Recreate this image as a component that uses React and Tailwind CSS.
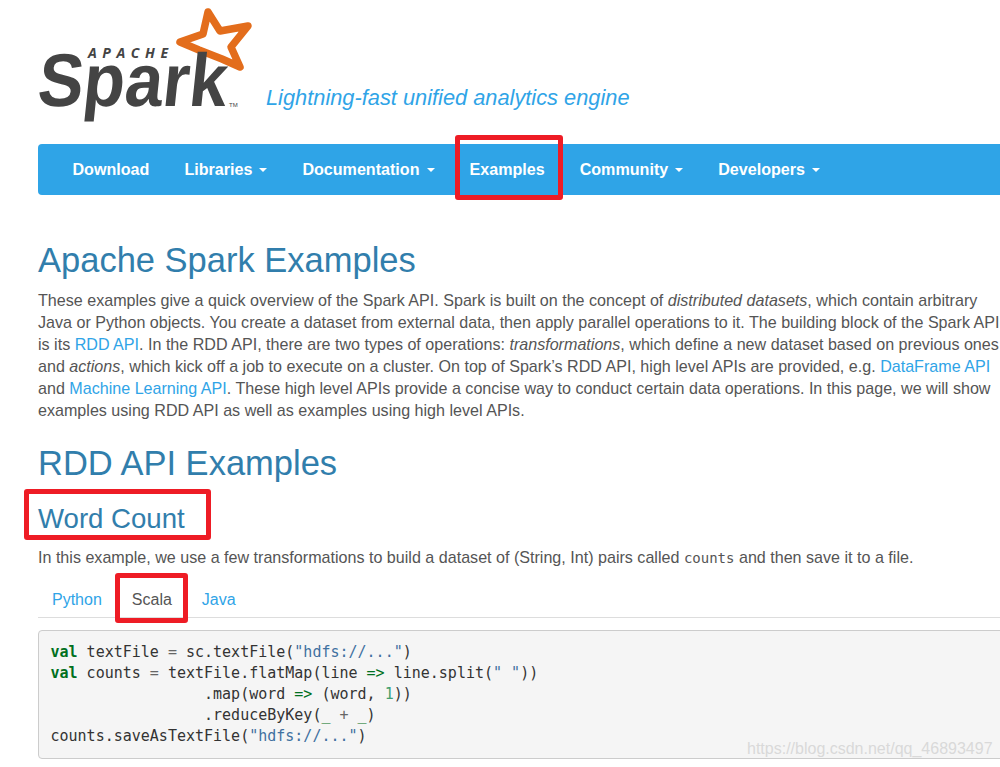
const sans = { fontFamily: '"Liberation Sans", Arial, sans-serif' };

function Logo() {
  return (
    <svg width="230" height="125" viewBox="30 0 230 125" className="block ml-[30px] shrink-0">
      <path d="M208 12 L220 31 L248 26 L231 47 L240 67 L222 59 L199 50 L180 42 L203 34 Z" fill="none" stroke="#e36d1c" strokeWidth="7.5" strokeLinejoin="round" />
      <text x="88" y="58" fontFamily="Open Sans" fontWeight="700" fontStyle="italic" fontSize="14" textLength="80" fill="#444">APACHE</text>
      <text transform="translate(36,106) skewX(-6)" fontFamily="Liberation Sans" fontWeight="700" fontSize="75" textLength="189" lengthAdjust="spacingAndGlyphs" fill="#444">Spark</text>
      <text x="229" y="107" fontFamily="Liberation Sans" fontSize="6" fill="#444">TM</text>
    </svg>
  );
}

function Caret() {
  return <span className="inline-block ml-[7px] align-middle w-0 h-0 border-t-[4.5px] border-x-[4.5px] border-x-transparent border-t-white" />;
}

function NavItem({ label, caret }) {
  return (
    <span className="px-[17.5px] text-white font-bold text-[16.1px] leading-[22px] whitespace-nowrap">
      {label}
      {caret && <Caret />}
    </span>
  );
}

function Highlight({ className }) {
  return <div className={"absolute border-[5px] border-[#ee1c25] rounded-[3px] " + className} />;
}

const Kw = ({ children }) => <span className="font-bold text-[#007020]">{children}</span>;
const Op = ({ children }) => <span className="text-[#666666]">{children}</span>;
const Str = ({ children }) => <span className="text-[#4070a0]">{children}</span>;
const Gr = ({ children }) => <span className="text-[#007020]">{children}</span>;
const Link = ({ children }) => <span className="text-[#2fa4e7]">{children}</span>;

export default function App() {
  return (
    <div className="relative w-[1000px] h-[767px] overflow-hidden bg-white text-[#555555] text-[16.1px] leading-[22px]" style={sans}>
      <div className="flex items-start h-[125px]">
        <Logo />
        <div className="text-[#2fa4e7] italic text-[21.8px] leading-[26px] mt-[85px] ml-[6px] whitespace-nowrap">Lightning-fast unified analytics engine</div>
      </div>

      <div className="ml-[38px] mt-[19px] w-[1000px] h-[51px] bg-[#2fa4e7] rounded-[4px] flex items-center pl-[17px] pb-[2px]">
        <NavItem label="Download" />
        <NavItem label="Libraries" caret />
        <NavItem label="Documentation" caret />
        <NavItem label="Examples" />
        <NavItem label="Community" caret />
        <NavItem label="Developers" caret />
      </div>

      <div className="ml-[38px] w-[968px]">
        <h1 className="text-[#317eac] text-[34.5px] leading-[40px] font-normal mt-[45px]">Apache Spark Examples</h1>
        <p className="mt-[9px]">
          These examples give a quick overview of the Spark API. Spark is built on the concept of <em>distributed datasets</em>, which contain arbitrary Java or Python objects. You create a dataset from external data, then apply parallel operations to it. The building block of the Spark API is its <Link>RDD API</Link>. In the RDD API, there are two types of operations: <em>transformations</em>, which define a new dataset based on previous ones and <em>actions</em>, which kick off a job to execute on a cluster. On top of Spark’s RDD API, high level APIs are provided, e.g. <Link>DataFrame API</Link> and <Link>Machine Learning API</Link>. These high level APIs provide a concise way to conduct certain data operations. In this page, we will show examples using RDD API as well as examples using high level APIs.
        </p>
        <h2 className="text-[#317eac] text-[34.5px] leading-[40px] font-normal mt-[22px]">RDD API Examples</h2>
        <h3 className="text-[#317eac] text-[27.6px] leading-[32px] font-normal mt-[20px]">Word Count</h3>
        <p className="mt-[11px]">
          In this example, we use a few transformations to build a dataset of (String, Int) pairs called{" "}
          <code className="text-[14px]" style={{ fontFamily: '"DejaVu Sans Mono", monospace' }}>counts</code> and then save it to a file.
        </p>
      </div>

      <div className="ml-[38px] mt-[11px] w-[1000px] h-[38px] border-b border-[#dddddd] flex text-base">
        <span className="px-[14px] pt-[8px] text-[#2fa4e7]">Python</span>
        <span className="px-[16px] pt-[8px] text-[#555555]">Scala</span>
        <span className="px-[14px] pt-[8px] text-[#2fa4e7]">Java</span>
      </div>

      <pre className="ml-[38px] mt-[12px] w-[1000px] h-[129px] bg-[#f5f5f5] border border-[#cccccc] rounded-[4px] pl-[11.5px] pt-[11px] text-[15px] leading-[21px] text-[#333333]" style={{ fontFamily: '"DejaVu Sans Mono", monospace' }}>
        <Kw>val</Kw> textFile <Op>=</Op> sc.textFile(<Str>"hdfs://..."</Str>){"\n"}
        <Kw>val</Kw> counts <Op>=</Op> textFile.flatMap(line <Gr>=&gt;</Gr> line.split(<Str>" "</Str>)){"\n"}
        {"                 "}.map(word <Gr>=&gt;</Gr> (word, <span className="text-[#40a070]">1</span>)){"\n"}
        {"                 "}.reduceByKey(<Gr>_</Gr> <Op>+</Op> <Gr>_</Gr>){"\n"}
        counts.saveAsTextFile(<Str>"hdfs://..."</Str>)
      </pre>

      <Highlight className="left-[455px] top-[135px] w-[108px] h-[65px]" />
      <Highlight className="left-[24px] top-[489px] w-[187px] h-[51px]" />
      <Highlight className="left-[115px] top-[573px] w-[73px] h-[50px]" />

      <div className="absolute left-[747px] top-[737px] text-[16px] leading-[24px] text-[#d9d9d9] whitespace-nowrap">https://blog.csdn.net/qq_46893497</div>
    </div>
  );
}
